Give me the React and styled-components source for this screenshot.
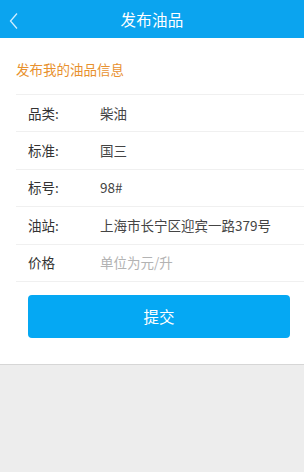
import React from 'react';
import styled, { createGlobalStyle } from 'styled-components';

const GlobalStyle = createGlobalStyle`
  html, body {
    margin: 0;
    padding: 0;
    background: #ededed;
    font-family: "Noto Sans CJK SC", "Liberation Sans", sans-serif;
  }
`;

const Page = styled.div`
  width: 304px;
  min-height: 472px;
  background: #ededed;
`;

const TopBar = styled.div`
  position: relative;
  height: 38px;
  background: #0ba4ef;
  display: flex;
  align-items: center;
  justify-content: center;
`;

const Back = styled.div`
  position: absolute;
  left: 8px;
  top: 11px;
  width: 12px;
  height: 18px;
`;

const Title = styled.h1`
  margin: 0;
  color: #fff;
  font-size: 15.5px;
  font-weight: 400;
  letter-spacing: 0.3px;
`;

const Card = styled.div`
  background: #fff;
  border-bottom: 1px solid #d6d6d6;
  padding-bottom: 26px;
`;

const SectionTitle = styled.div`
  color: #e8912e;
  font-size: 13.5px;
  line-height: 16px;
  margin-left: 16px;
  padding: 23px 0 17px;
  border-bottom: 1px solid #f0f0f0;
`;

const List = styled.div`
  margin-left: 16px;
`;

const Row = styled.div`
  display: flex;
  align-items: center;
  box-sizing: border-box;
  height: 37.4px;
  padding-left: 12px;
  padding-bottom: 1px;
  border-bottom: 1px solid #f0f0f0;
  font-size: 13.5px;
  line-height: 16px;
`;

const Label = styled.span`
  width: 72px;
  color: #333;
`;

const Value = styled.span`
  color: ${(p) => (p.$placeholder ? '#b3b3b3' : '#444')};
`;

const Submit = styled.button`
  display: block;
  margin: 13px 14px 0 28px;
  width: 262px;
  height: 43px;
  border: none;
  border-radius: 4px;
  background: #05a8f3;
  color: #fff;
  font-family: inherit;
  font-size: 15.5px;
`;

const rows = [
  ['品类:', '柴油'],
  ['标准:', '国三'],
  ['标号:', '98#'],
  ['油站:', '上海市长宁区迎宾一路379号'],
];

export default function App() {
  return (
    <Page>
      <GlobalStyle />
      <TopBar>
        <Back>
          <svg width="12" height="18" viewBox="0 0 12 18">
            <polyline points="9,1.5 2.5,9 9,16.5" fill="none" stroke="#cfeeff" strokeWidth="1.3" />
          </svg>
        </Back>
        <Title>发布油品</Title>
      </TopBar>
      <Card>
        <SectionTitle>发布我的油品信息</SectionTitle>
        <List>
          {rows.map(([k, v]) => (
            <Row key={k}>
              <Label>{k}</Label>
              <Value>{v}</Value>
            </Row>
          ))}
          <Row>
            <Label>价格</Label>
            <Value $placeholder>单位为元/升</Value>
          </Row>
        </List>
        <Submit>提交</Submit>
      </Card>
    </Page>
  );
}
